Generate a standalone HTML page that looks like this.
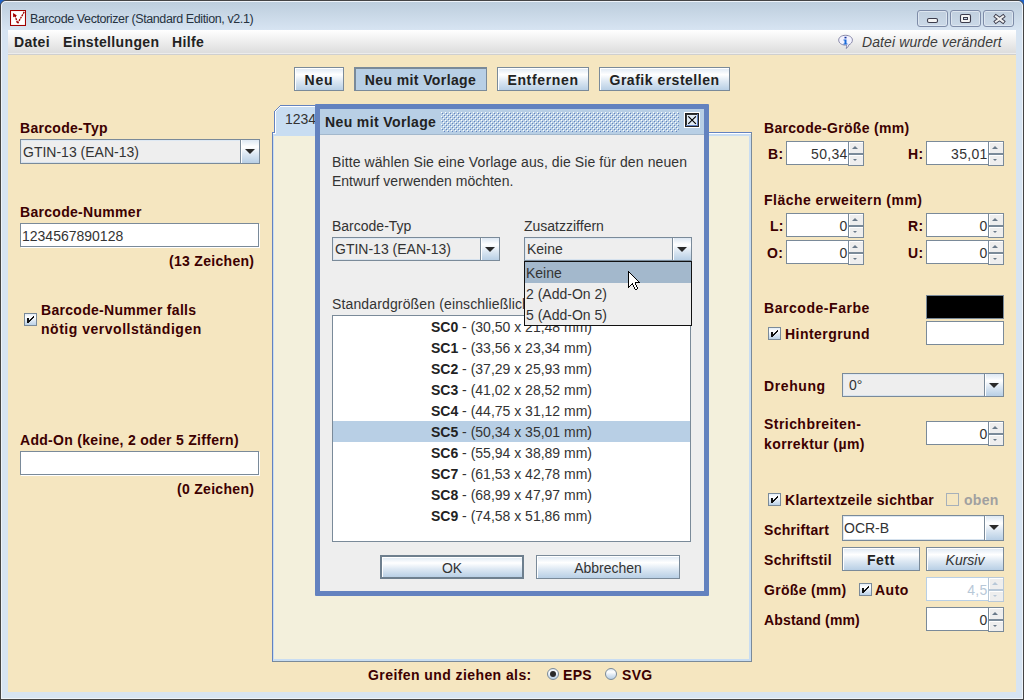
<!DOCTYPE html>
<html><head><meta charset="utf-8">
<style>
*{box-sizing:border-box}
html,body{margin:0;padding:0}
body{width:1024px;height:700px;overflow:hidden;position:relative;background:#1f63c8;font-family:"Liberation Sans",sans-serif}
.a{position:absolute}
.t{position:absolute;white-space:pre;line-height:16px;font-size:14px;font-family:"Liberation Sans",sans-serif}
.lb{font-weight:bold;letter-spacing:.3px;color:#3c0000}
.rg{color:#333}
/* frame */
#frame{left:0;top:0;width:1024px;height:700px;border:1px solid #444;border-radius:6px 6px 0 0;background:linear-gradient(#bccddc 0,#d7e4f2 29px,#d7e4f2 100%)}
#frame2{left:1px;top:1px;width:1022px;height:698px;border:1px solid #eef3f9;border-radius:5px 5px 0 0}
#menubar{left:8px;top:30px;width:1008px;height:25px;background:linear-gradient(#ffffff 0,#dedede 22px,#dedede 23px);border-bottom:1px solid #cfcfcf}
#menubar:after{content:"";position:absolute;left:0;top:23px;width:100%;height:1px;background:#ececec}
#content{left:8px;top:55px;width:1008px;height:637px;background:#f5e6c0}
.wbtn{top:10px;width:31px;height:17px;border:1px solid #7e8ca8;border-radius:3px;background:linear-gradient(#c0cfde,#cbd9e8);box-shadow:inset 0 0 0 1px #dde6f0}
/* metal button */
.btn{position:absolute;border:1px solid #7a8a99;background:linear-gradient(#dde8f3 0%,#ffffff 30%,#dde8f3 60%,#b8cfe5 100%);box-shadow:inset 1px 1px 0 #fff}
.btn span{position:absolute;left:0;right:0;text-align:center;white-space:pre;font-size:14px;line-height:16px}
/* text field */
.tf{position:absolute;background:#fff;border:1px solid #7a8a99;box-shadow:1px 1px 0 #fff}
.combo{position:absolute;background:#eeeeee;border:1px solid #7a8a99;box-shadow:inset 1px 1px 0 #dde8f3,inset 0 -1px 0 #d6e2ee}
.arrowbtn{position:absolute;top:0;bottom:0;right:0;width:19px;border-left:1px solid #7a8a99;background:linear-gradient(#dde8f3 0%,#ffffff 30%,#dde8f3 60%,#b8cfe5 100%);box-shadow:inset 1px 0 0 #fff}
.arrowbtn:after{content:"";position:absolute;left:4px;top:9px;border-left:5px solid transparent;border-right:5px solid transparent;border-top:5px solid #2a2a2a}
/* spinner */
.spin{position:absolute;height:25px;width:78px}
.spin .f{position:absolute;left:0;top:0;width:63px;height:24px;background:#fff;border:1px solid #7a8a99;border-right:none}
.spin .f span{position:absolute;right:1.4px;top:4px;font-size:14px;line-height:16px;color:#333;letter-spacing:.3px}
.spin .u,.spin .d{position:absolute;left:62px;width:16px;background:#eee;border:1px solid #7a8a99;box-shadow:inset 1px 1px 0 #fff}
.spin .u{top:0;height:13px}
.spin .d{top:13px;height:12px}
.spin .u:after{content:"";position:absolute;left:3px;top:4px;border-left:3px solid transparent;border-right:3px solid transparent;border-bottom:3px solid #6a7a8a}
.spin .d:after{content:"";position:absolute;left:4px;top:4px;border-left:2px solid transparent;border-right:2px solid transparent;border-top:2px solid #6a7a8a}
/* checkbox */
.cb{position:absolute;width:13px;height:13px;border:1px solid #7a8a99;background:linear-gradient(#dde8f3 0%,#ffffff 30%,#dde8f3 60%,#b8cfe5 100%)}
.spin.dis .f{border-color:#b8cfe5}
.spin.dis .f span{color:#b8c8d8}
.spin.dis .u,.spin.dis .d{border-color:#b8c8d8}
.spin.dis .u:after{border-bottom-color:#b8c8d8}
.spin.dis .d:after{border-top-color:#b8c8d8}
</style></head>
<body>
<div id="frame" class="a"></div>
<div id="frame2" class="a"></div>
<div class="a" style="left:0;top:699px;width:1024px;height:1px;background:#444"></div>

<!-- title icon -->
<svg class="a" style="left:10px;top:10px" width="16" height="16">
<rect x="0.5" y="0.5" width="15" height="15" fill="#fff" stroke="#a00000" stroke-width="1.1"/>
<path d="M3 3 L3.2 7.2 L7 5.6 Z" fill="#a80000"/>
<path d="M5 5.5 L7.6 13.4 L14.6 1.2" fill="none" stroke="#a00000" stroke-width="1.35" stroke-dasharray="2 0.8"/>
</svg>
<div class="t" style="left:30px;top:11px;font-size:12.5px;letter-spacing:-.4px;color:#26323f">Barcode Vectorizer (Standard Edition, v2.1)</div>

<div class="a wbtn" style="left:917px"></div>
<div class="a wbtn" style="left:950px"></div>
<div class="a wbtn" style="left:983px"></div>
<svg class="a" style="left:917px;top:10px" width="100" height="17">
<rect x="10.5" y="8.5" width="10" height="4" rx="1.5" fill="#f4f4f4" stroke="#3c3c4c" stroke-width="1.1"/>
<rect x="43.5" y="4.5" width="10" height="8" rx="1.5" fill="#f4f4f4" stroke="#3c3c4c" stroke-width="1.1"/>
<rect x="46.5" y="7.5" width="4" height="2" fill="#c8d6e4" stroke="#3c3c4c" stroke-width="1"/>
<path d="M79 6.4 L86 11.6 M86 6.4 L79 11.6" stroke="#3c3c4c" stroke-width="3.9" stroke-linecap="square"/>
<path d="M79 6.4 L86 11.6 M86 6.4 L79 11.6" stroke="#f0f0f0" stroke-width="2.1" stroke-linecap="square"/>
</svg>

<div id="menubar" class="a"></div>
<div class="t lb" style="left:14px;top:34px;color:#222;letter-spacing:.35px">Datei</div>
<div class="t lb" style="left:63px;top:34px;color:#222;letter-spacing:.35px">Einstellungen</div>
<div class="t lb" style="left:172px;top:34px;color:#222;letter-spacing:.35px">Hilfe</div>
<svg class="a" style="left:838px;top:34px" width="16" height="16">
<path d="M7.5 1.3 C11.5 1.3 14.4 3.2 14.4 6.1 C14.4 8.4 12.9 10 10.8 10.8 C10.4 12.4 9.6 13.6 8.2 14.5 C8.7 13.3 8.8 12.1 8.5 11.1 L7.5 11.1 C3.6 11.1 0.7 9 0.7 6.1 C0.7 3.2 3.6 1.3 7.5 1.3 Z" fill="#f2f2ff" stroke="#8888a8" stroke-width="1"/>
<rect x="6.5" y="2.8" width="2" height="1.6" fill="#1030a0"/>
<path d="M5.5 5.5 H8.5 V9.5 H9.5 V10.5 H5.5 V9.5 H6.5 V6.5 H5.5 Z" fill="#1a6ad8"/>
</svg>
<div class="t" style="left:862px;top:34px;font-style:italic;color:#3c3c3c;letter-spacing:.1px">Datei wurde verändert</div>

<div id="content" class="a"></div>

<!-- toolbar -->
<div class="btn" style="left:294px;top:67px;width:50px;height:24px"><span class="lb" style="top:4px;color:#222;letter-spacing:.9px">Neu</span></div>
<div class="btn" style="left:354px;top:67px;width:133px;height:24px;background:#b8cfe5;border-color:#7a8a99;border-width:2px 1px 1px 2px;box-shadow:none"><span class="lb" style="top:3px;left:-1px;color:#222;letter-spacing:.4px">Neu mit Vorlage</span></div>
<div class="btn" style="left:497px;top:67px;width:92px;height:24px"><span class="lb" style="top:4px;color:#222;letter-spacing:.65px">Entfernen</span></div>
<div class="btn" style="left:599px;top:67px;width:131px;height:24px"><span class="lb" style="top:4px;color:#222;letter-spacing:.5px">Grafik erstellen</span></div>

<!-- left panel -->
<div class="t lb" style="left:20px;top:120px">Barcode-Typ</div>
<div class="combo" style="left:20px;top:139px;width:240px;height:25px"><div class="t rg" style="left:2px;top:4px">GTIN-13 (EAN-13)</div><div class="arrowbtn"></div></div>

<div class="t lb" style="left:20px;top:204px">Barcode-Nummer</div>
<div class="tf" style="left:20px;top:223px;width:239px;height:24px"><div class="t rg" style="left:1px;top:4px">1234567890128</div></div>
<div class="t lb" style="left:169px;top:253px">(13 Zeichen)</div>

<svg class="a" style="left:24px;top:313px" width="13" height="13" shape-rendering="crispEdges"><defs><linearGradient id="g24313" x1="0" y1="0" x2="0" y2="1"><stop offset="0" stop-color="#dde8f3"/><stop offset=".3" stop-color="#fff"/><stop offset=".6" stop-color="#dde8f3"/><stop offset="1" stop-color="#b8cfe5"/></linearGradient></defs><rect x="0.5" y="0.5" width="12" height="12" fill="url(#g24313)" stroke="#7a8a99"/><rect x="3" y="5" width="2" height="5" fill="#111"/><rect x="9" y="3" width="1" height="1" fill="#111"/><rect x="8" y="4" width="1" height="1" fill="#111"/><rect x="7" y="5" width="1" height="1" fill="#111"/><rect x="6" y="6" width="1" height="1" fill="#111"/><rect x="5" y="7" width="1" height="1" fill="#111"/><rect x="9" y="4" width="1" height="1" fill="#111"/><rect x="8" y="5" width="1" height="1" fill="#111"/><rect x="7" y="6" width="1" height="1" fill="#111"/><rect x="6" y="7" width="1" height="1" fill="#111"/><rect x="5" y="8" width="1" height="1" fill="#111"/></svg>
<div class="t lb" style="left:41px;top:302px;letter-spacing:.3px">Barcode-Nummer falls</div>
<div class="t lb" style="left:41px;top:321px;letter-spacing:.52px">nötig vervollständigen</div>

<div class="t lb" style="left:20px;top:432px">Add-On (keine, 2 oder 5 Ziffern)</div>
<div class="tf" style="left:20px;top:451px;width:239px;height:24px"></div>
<div class="t lb" style="left:177px;top:481px">(0 Zeichen)</div>


<!-- tab pane -->
<div class="a" style="left:272px;top:132px;width:480px;height:530px;background:#f3f0dc;border-top:1px solid #6382bf;border-left:1px solid #6382bf;border-right:1px solid #7a8a99;border-bottom:1px solid #7a8a99"></div>
<div class="a" style="left:273px;top:133px;width:478px;height:1px;background:#fff"></div>
<div class="a" style="left:273px;top:134px;width:478px;height:2px;background:#c8ddf2"></div>
<div class="a" style="left:273px;top:134px;width:1px;height:527px;background:#c8ddf2"></div>
<div class="a" style="left:749px;top:134px;width:2px;height:527px;background:#c8ddf2"></div>
<div class="a" style="left:273px;top:659px;width:478px;height:2px;background:#c8ddf2"></div>
<svg class="a" style="left:272px;top:104px" width="50" height="32" shape-rendering="crispEdges">
<polygon points="3,8 8,3 50,3 50,32 1,32 1,29 3,29" fill="#c8ddf2"/>
<g fill="#6382bf"><rect x="2" y="7" width="1" height="22"/><rect x="3" y="6" width="1" height="1"/><rect x="4" y="5" width="1" height="1"/><rect x="5" y="4" width="1" height="1"/><rect x="6" y="3" width="1" height="1"/><rect x="7" y="2" width="1" height="1"/><rect x="8" y="1" width="42" height="1"/><rect x="0" y="28" width="3" height="1"/></g>
<g fill="#fff"><rect x="3" y="7" width="1" height="22"/><rect x="4" y="6" width="1" height="1"/><rect x="5" y="5" width="1" height="1"/><rect x="6" y="4" width="1" height="1"/><rect x="7" y="3" width="1" height="1"/><rect x="8" y="2" width="42" height="1"/><rect x="1" y="29" width="3" height="1"/></g>
</svg>
<div class="t rg" style="left:285px;top:111px">1234</div>

<!-- dialog -->
<div class="a" style="left:315px;top:104px;width:394px;height:492px;background:#6382bf;border-radius:1px"></div>
<div class="a" style="left:320px;top:109px;width:384px;height:26px;background:#b8cfe5;border-bottom:1px solid #a3b8cc"></div>
<svg class="a" style="left:441px;top:112px" width="238" height="20">
<defs><pattern id="bump" width="4" height="4" patternUnits="userSpaceOnUse">
<rect x="0" y="0" width="1" height="1" fill="#fff"/><rect x="2" y="2" width="1" height="1" fill="#fff"/>
<rect x="1" y="1" width="1" height="1" fill="#6382bf"/><rect x="3" y="3" width="1" height="1" fill="#6382bf"/>
</pattern></defs><rect width="238" height="20" fill="url(#bump)"/></svg>
<div class="t lb" style="left:325px;top:114px;color:#222;letter-spacing:.38px">Neu mit Vorlage</div>
<svg class="a" style="left:684px;top:112px" width="16" height="16" shape-rendering="crispEdges">
<rect x="0" y="0" width="16" height="16" fill="#fff"/>
<rect x="1" y="1" width="14" height="14" fill="#222"/>
<rect x="2" y="2" width="12" height="12" fill="#6382bf"/>
<rect x="3" y="3" width="10" height="10" fill="#e2ecf6"/>
<rect x="2" y="2" width="1" height="11" fill="#333"/><rect x="2" y="2" width="11" height="1" fill="#333"/>
</svg>
<svg class="a" style="left:684px;top:112px" width="16" height="16"><path d="M4.3 4.3 L11.9 11.9 M11.9 4.3 L4.3 11.9" stroke="#000" stroke-width="1.15"/></svg>
<div class="a" style="left:320px;top:135px;width:384px;height:456px;background:#eeeeee"></div>

<div class="t rg" style="left:332px;top:153px;line-height:19px;letter-spacing:.1px">Bitte wählen Sie eine Vorlage aus, die Sie für den neuen</div>
<div class="t rg" style="left:332px;top:172px;line-height:19px">Entwurf verwenden möchten.</div>
<div class="t rg" style="left:332px;top:218px">Barcode-Typ</div>
<div class="combo" style="left:332px;top:237px;width:168px;height:24px"><div class="t rg" style="left:2px;top:3px">GTIN-13 (EAN-13)</div><div class="arrowbtn"></div></div>
<div class="t rg" style="left:524px;top:218px">Zusatzziffern</div>
<div class="combo" style="left:524px;top:237px;width:168px;height:24px"><div class="t rg" style="left:2px;top:3px">Keine</div><div class="arrowbtn"></div></div>

<div class="t rg" style="left:332px;top:296px;letter-spacing:.14px">Standardgrößen (einschließlich Ruhezonen)</div>
<div class="a" style="left:332px;top:315px;width:359px;height:227px;background:#fff;border:1px solid #7a8a99"></div>
<div class="a" style="left:333px;top:421px;width:357px;height:21px;background:#b8cfe5"></div>
<div id="list" class="a" style="left:333px;top:317px;width:357px"><div style="height:21px;line-height:21px;text-align:center;font-size:14px;color:#333;white-space:pre"><b style="color:#222">SC0</b> - (30,50 x 21,48 mm)</div><div style="height:21px;line-height:21px;text-align:center;font-size:14px;color:#333;white-space:pre"><b style="color:#222">SC1</b> - (33,56 x 23,34 mm)</div><div style="height:21px;line-height:21px;text-align:center;font-size:14px;color:#333;white-space:pre"><b style="color:#222">SC2</b> - (37,29 x 25,93 mm)</div><div style="height:21px;line-height:21px;text-align:center;font-size:14px;color:#333;white-space:pre"><b style="color:#222">SC3</b> - (41,02 x 28,52 mm)</div><div style="height:21px;line-height:21px;text-align:center;font-size:14px;color:#333;white-space:pre"><b style="color:#222">SC4</b> - (44,75 x 31,12 mm)</div><div style="height:21px;line-height:21px;text-align:center;font-size:14px;color:#333;white-space:pre"><b style="color:#222">SC5</b> - (50,34 x 35,01 mm)</div><div style="height:21px;line-height:21px;text-align:center;font-size:14px;color:#333;white-space:pre"><b style="color:#222">SC6</b> - (55,94 x 38,89 mm)</div><div style="height:21px;line-height:21px;text-align:center;font-size:14px;color:#333;white-space:pre"><b style="color:#222">SC7</b> - (61,53 x 42,78 mm)</div><div style="height:21px;line-height:21px;text-align:center;font-size:14px;color:#333;white-space:pre"><b style="color:#222">SC8</b> - (68,99 x 47,97 mm)</div><div style="height:21px;line-height:21px;text-align:center;font-size:14px;color:#333;white-space:pre"><b style="color:#222">SC9</b> - (74,58 x 51,86 mm)</div></div>

<!-- popup -->
<div class="a" style="left:524px;top:261px;width:168px;height:65px;background:#eeeeee;border:1px solid #111"></div>
<div class="a" style="left:525px;top:262px;width:166px;height:21px;background:#a3b8cc"></div>
<div class="t rg" style="left:526px;top:265px">Keine</div>
<div class="t rg" style="left:526px;top:286px">2 (Add-On 2)</div>
<div class="t rg" style="left:526px;top:307px">5 (Add-On 5)</div>
<svg class="a" style="left:628px;top:271px" width="12" height="19" shape-rendering="crispEdges"><rect x="0" y="0" width="1" height="1" fill="#000"/><rect x="0" y="1" width="1" height="1" fill="#000"/><rect x="1" y="1" width="1" height="1" fill="#000"/><rect x="0" y="2" width="1" height="1" fill="#000"/><rect x="1" y="2" width="1" height="1" fill="#fff"/><rect x="2" y="2" width="1" height="1" fill="#000"/><rect x="0" y="3" width="1" height="1" fill="#000"/><rect x="1" y="3" width="1" height="1" fill="#fff"/><rect x="2" y="3" width="1" height="1" fill="#fff"/><rect x="3" y="3" width="1" height="1" fill="#000"/><rect x="0" y="4" width="1" height="1" fill="#000"/><rect x="1" y="4" width="1" height="1" fill="#fff"/><rect x="2" y="4" width="1" height="1" fill="#fff"/><rect x="3" y="4" width="1" height="1" fill="#fff"/><rect x="4" y="4" width="1" height="1" fill="#000"/><rect x="0" y="5" width="1" height="1" fill="#000"/><rect x="1" y="5" width="1" height="1" fill="#fff"/><rect x="2" y="5" width="1" height="1" fill="#fff"/><rect x="3" y="5" width="1" height="1" fill="#fff"/><rect x="4" y="5" width="1" height="1" fill="#fff"/><rect x="5" y="5" width="1" height="1" fill="#000"/><rect x="0" y="6" width="1" height="1" fill="#000"/><rect x="1" y="6" width="1" height="1" fill="#fff"/><rect x="2" y="6" width="1" height="1" fill="#fff"/><rect x="3" y="6" width="1" height="1" fill="#fff"/><rect x="4" y="6" width="1" height="1" fill="#fff"/><rect x="5" y="6" width="1" height="1" fill="#fff"/><rect x="6" y="6" width="1" height="1" fill="#000"/><rect x="0" y="7" width="1" height="1" fill="#000"/><rect x="1" y="7" width="1" height="1" fill="#fff"/><rect x="2" y="7" width="1" height="1" fill="#fff"/><rect x="3" y="7" width="1" height="1" fill="#fff"/><rect x="4" y="7" width="1" height="1" fill="#fff"/><rect x="5" y="7" width="1" height="1" fill="#fff"/><rect x="6" y="7" width="1" height="1" fill="#fff"/><rect x="7" y="7" width="1" height="1" fill="#000"/><rect x="0" y="8" width="1" height="1" fill="#000"/><rect x="1" y="8" width="1" height="1" fill="#fff"/><rect x="2" y="8" width="1" height="1" fill="#fff"/><rect x="3" y="8" width="1" height="1" fill="#fff"/><rect x="4" y="8" width="1" height="1" fill="#fff"/><rect x="5" y="8" width="1" height="1" fill="#fff"/><rect x="6" y="8" width="1" height="1" fill="#fff"/><rect x="7" y="8" width="1" height="1" fill="#fff"/><rect x="8" y="8" width="1" height="1" fill="#000"/><rect x="0" y="9" width="1" height="1" fill="#000"/><rect x="1" y="9" width="1" height="1" fill="#fff"/><rect x="2" y="9" width="1" height="1" fill="#fff"/><rect x="3" y="9" width="1" height="1" fill="#fff"/><rect x="4" y="9" width="1" height="1" fill="#fff"/><rect x="5" y="9" width="1" height="1" fill="#fff"/><rect x="6" y="9" width="1" height="1" fill="#fff"/><rect x="7" y="9" width="1" height="1" fill="#fff"/><rect x="8" y="9" width="1" height="1" fill="#fff"/><rect x="9" y="9" width="1" height="1" fill="#000"/><rect x="0" y="10" width="1" height="1" fill="#000"/><rect x="1" y="10" width="1" height="1" fill="#fff"/><rect x="2" y="10" width="1" height="1" fill="#fff"/><rect x="3" y="10" width="1" height="1" fill="#fff"/><rect x="4" y="10" width="1" height="1" fill="#fff"/><rect x="5" y="10" width="1" height="1" fill="#fff"/><rect x="6" y="10" width="1" height="1" fill="#fff"/><rect x="7" y="10" width="1" height="1" fill="#fff"/><rect x="8" y="10" width="1" height="1" fill="#fff"/><rect x="9" y="10" width="1" height="1" fill="#fff"/><rect x="10" y="10" width="1" height="1" fill="#000"/><rect x="0" y="11" width="1" height="1" fill="#000"/><rect x="1" y="11" width="1" height="1" fill="#fff"/><rect x="2" y="11" width="1" height="1" fill="#fff"/><rect x="3" y="11" width="1" height="1" fill="#fff"/><rect x="4" y="11" width="1" height="1" fill="#fff"/><rect x="5" y="11" width="1" height="1" fill="#fff"/><rect x="6" y="11" width="1" height="1" fill="#fff"/><rect x="7" y="11" width="1" height="1" fill="#000"/><rect x="8" y="11" width="1" height="1" fill="#000"/><rect x="9" y="11" width="1" height="1" fill="#000"/><rect x="10" y="11" width="1" height="1" fill="#000"/><rect x="11" y="11" width="1" height="1" fill="#000"/><rect x="0" y="12" width="1" height="1" fill="#000"/><rect x="1" y="12" width="1" height="1" fill="#fff"/><rect x="2" y="12" width="1" height="1" fill="#fff"/><rect x="3" y="12" width="1" height="1" fill="#fff"/><rect x="4" y="12" width="1" height="1" fill="#000"/><rect x="5" y="12" width="1" height="1" fill="#fff"/><rect x="6" y="12" width="1" height="1" fill="#fff"/><rect x="7" y="12" width="1" height="1" fill="#000"/><rect x="0" y="13" width="1" height="1" fill="#000"/><rect x="1" y="13" width="1" height="1" fill="#fff"/><rect x="2" y="13" width="1" height="1" fill="#fff"/><rect x="3" y="13" width="1" height="1" fill="#000"/><rect x="4" y="13" width="1" height="1" fill="#000"/><rect x="5" y="13" width="1" height="1" fill="#fff"/><rect x="6" y="13" width="1" height="1" fill="#fff"/><rect x="7" y="13" width="1" height="1" fill="#000"/><rect x="0" y="14" width="1" height="1" fill="#000"/><rect x="1" y="14" width="1" height="1" fill="#fff"/><rect x="2" y="14" width="1" height="1" fill="#000"/><rect x="5" y="14" width="1" height="1" fill="#000"/><rect x="6" y="14" width="1" height="1" fill="#fff"/><rect x="7" y="14" width="1" height="1" fill="#fff"/><rect x="8" y="14" width="1" height="1" fill="#000"/><rect x="0" y="15" width="1" height="1" fill="#000"/><rect x="1" y="15" width="1" height="1" fill="#000"/><rect x="5" y="15" width="1" height="1" fill="#000"/><rect x="6" y="15" width="1" height="1" fill="#fff"/><rect x="7" y="15" width="1" height="1" fill="#fff"/><rect x="8" y="15" width="1" height="1" fill="#000"/><rect x="0" y="16" width="1" height="1" fill="#000"/><rect x="6" y="16" width="1" height="1" fill="#000"/><rect x="7" y="16" width="1" height="1" fill="#fff"/><rect x="8" y="16" width="1" height="1" fill="#fff"/><rect x="9" y="16" width="1" height="1" fill="#000"/><rect x="6" y="17" width="1" height="1" fill="#000"/><rect x="7" y="17" width="1" height="1" fill="#fff"/><rect x="8" y="17" width="1" height="1" fill="#fff"/><rect x="9" y="17" width="1" height="1" fill="#000"/><rect x="7" y="18" width="1" height="1" fill="#000"/><rect x="8" y="18" width="1" height="1" fill="#000"/></svg>

<div class="btn" style="left:380px;top:555px;width:144px;height:24px;border:2px solid #6e7f8e"><span class="rg" style="top:3px">OK</span></div>
<div class="btn" style="left:536px;top:555px;width:144px;height:24px"><span class="rg" style="top:4px">Abbrechen</span></div>

<!-- bottom -->
<div class="t lb" style="left:368px;top:667px;letter-spacing:.42px">Greifen und ziehen als:</div>
<div class="a" style="left:547px;top:668px;width:12px;height:12px;border-radius:50%;border:1px solid #7a8a99;background:linear-gradient(#dde8f3,#fff 30%,#dde8f3 60%,#b8cfe5)"></div>
<div class="a" style="left:550px;top:671px;width:6px;height:6px;border-radius:50%;background:#2a2a2a"></div>
<div class="t lb" style="left:563px;top:667px">EPS</div>
<div class="a" style="left:605px;top:668px;width:12px;height:12px;border-radius:50%;border:1px solid #7a8a99;background:linear-gradient(#dde8f3,#fff 30%,#dde8f3 60%,#b8cfe5)"></div>
<div class="t lb" style="left:622px;top:667px">SVG</div>


<!-- right panel -->
<div class="t lb" style="left:764px;top:120px">Barcode-Größe (mm)</div>
<div class="t lb" style="left:768px;top:146px">B:</div>
<div class="spin" style="left:786px;top:141px"><div class="f"><span>50,34</span></div><div class="u"></div><div class="d"></div></div>
<div class="t lb" style="left:908px;top:146px">H:</div>
<div class="spin" style="left:926px;top:141px"><div class="f"><span>35,01</span></div><div class="u"></div><div class="d"></div></div>
<div class="t lb" style="left:764px;top:192px;letter-spacing:.47px">Fläche erweitern (mm)</div>
<div class="t lb" style="left:770px;top:218px">L:</div>
<div class="spin" style="left:786px;top:213px"><div class="f"><span>0</span></div><div class="u"></div><div class="d"></div></div>
<div class="t lb" style="left:908px;top:218px">R:</div>
<div class="spin" style="left:926px;top:213px"><div class="f"><span>0</span></div><div class="u"></div><div class="d"></div></div>
<div class="t lb" style="left:767px;top:245px">O:</div>
<div class="spin" style="left:786px;top:240px"><div class="f"><span>0</span></div><div class="u"></div><div class="d"></div></div>
<div class="t lb" style="left:908px;top:245px">U:</div>
<div class="spin" style="left:926px;top:240px"><div class="f"><span>0</span></div><div class="u"></div><div class="d"></div></div>

<div class="t lb" style="left:764px;top:300px;letter-spacing:.55px">Barcode-Farbe</div>
<div class="a" style="left:926px;top:295px;width:78px;height:24px;background:#000;border:1px solid #7a8a99"></div>
<div class="a" style="left:926px;top:321px;width:78px;height:24px;background:#fff;border:1px solid #7a8a99"></div>
<svg class="a" style="left:768px;top:327px" width="13" height="13" shape-rendering="crispEdges"><defs><linearGradient id="g768327" x1="0" y1="0" x2="0" y2="1"><stop offset="0" stop-color="#dde8f3"/><stop offset=".3" stop-color="#fff"/><stop offset=".6" stop-color="#dde8f3"/><stop offset="1" stop-color="#b8cfe5"/></linearGradient></defs><rect x="0.5" y="0.5" width="12" height="12" fill="url(#g768327)" stroke="#7a8a99"/><rect x="3" y="5" width="2" height="5" fill="#111"/><rect x="9" y="3" width="1" height="1" fill="#111"/><rect x="8" y="4" width="1" height="1" fill="#111"/><rect x="7" y="5" width="1" height="1" fill="#111"/><rect x="6" y="6" width="1" height="1" fill="#111"/><rect x="5" y="7" width="1" height="1" fill="#111"/><rect x="9" y="4" width="1" height="1" fill="#111"/><rect x="8" y="5" width="1" height="1" fill="#111"/><rect x="7" y="6" width="1" height="1" fill="#111"/><rect x="6" y="7" width="1" height="1" fill="#111"/><rect x="5" y="8" width="1" height="1" fill="#111"/></svg>
<div class="t lb" style="left:785px;top:326px;letter-spacing:.45px">Hintergrund</div>

<div class="t lb" style="left:764px;top:378px;letter-spacing:.6px">Drehung</div>
<div class="combo" style="left:842px;top:373px;width:162px;height:24px"><div class="t rg" style="left:6px;top:3px">0°</div><div class="arrowbtn"></div></div>

<div class="t lb" style="left:764px;top:416px;letter-spacing:.45px">Strichbreiten-</div>
<div class="t lb" style="left:764px;top:436px;letter-spacing:.4px">korrektur (µm)</div>
<div class="spin" style="left:926px;top:421px"><div class="f"><span>0</span></div><div class="u"></div><div class="d"></div></div>

<svg class="a" style="left:768px;top:493px" width="13" height="13" shape-rendering="crispEdges"><defs><linearGradient id="g768494" x1="0" y1="0" x2="0" y2="1"><stop offset="0" stop-color="#dde8f3"/><stop offset=".3" stop-color="#fff"/><stop offset=".6" stop-color="#dde8f3"/><stop offset="1" stop-color="#b8cfe5"/></linearGradient></defs><rect x="0.5" y="0.5" width="12" height="12" fill="url(#g768494)" stroke="#7a8a99"/><rect x="3" y="5" width="2" height="5" fill="#111"/><rect x="9" y="3" width="1" height="1" fill="#111"/><rect x="8" y="4" width="1" height="1" fill="#111"/><rect x="7" y="5" width="1" height="1" fill="#111"/><rect x="6" y="6" width="1" height="1" fill="#111"/><rect x="5" y="7" width="1" height="1" fill="#111"/><rect x="9" y="4" width="1" height="1" fill="#111"/><rect x="8" y="5" width="1" height="1" fill="#111"/><rect x="7" y="6" width="1" height="1" fill="#111"/><rect x="6" y="7" width="1" height="1" fill="#111"/><rect x="5" y="8" width="1" height="1" fill="#111"/></svg>
<div class="t lb" style="left:785px;top:492px;letter-spacing:.38px">Klartextzeile sichtbar</div>
<svg class="a" style="left:946px;top:493px" width="13" height="13" shape-rendering="crispEdges"><rect x="0.5" y="0.5" width="12" height="12" fill="none" stroke="#a6b0ba"/></svg>
<div class="t lb" style="left:964px;top:492px;color:#a0a0a0">oben</div>

<div class="t lb" style="left:764px;top:522px">Schriftart</div>
<div class="combo" style="left:842px;top:515px;width:162px;height:26px;background:#fff"><div class="t rg" style="left:1px;top:4px">OCR-B</div><div class="arrowbtn"></div></div>

<div class="t lb" style="left:764px;top:552px">Schriftstil</div>
<div class="btn" style="left:842px;top:547px;width:78px;height:24px"><span class="lb" style="top:4px;color:#222;letter-spacing:.6px">Fett</span></div>
<div class="btn" style="left:926px;top:547px;width:78px;height:24px"><span class="rg" style="top:4px;font-style:italic">Kursiv</span></div>

<div class="t lb" style="left:764px;top:582px">Größe (mm)</div>
<svg class="a" style="left:859px;top:583px" width="13" height="13" shape-rendering="crispEdges"><defs><linearGradient id="g859584" x1="0" y1="0" x2="0" y2="1"><stop offset="0" stop-color="#dde8f3"/><stop offset=".3" stop-color="#fff"/><stop offset=".6" stop-color="#dde8f3"/><stop offset="1" stop-color="#b8cfe5"/></linearGradient></defs><rect x="0.5" y="0.5" width="12" height="12" fill="url(#g859584)" stroke="#7a8a99"/><rect x="3" y="5" width="2" height="5" fill="#111"/><rect x="9" y="3" width="1" height="1" fill="#111"/><rect x="8" y="4" width="1" height="1" fill="#111"/><rect x="7" y="5" width="1" height="1" fill="#111"/><rect x="6" y="6" width="1" height="1" fill="#111"/><rect x="5" y="7" width="1" height="1" fill="#111"/><rect x="9" y="4" width="1" height="1" fill="#111"/><rect x="8" y="5" width="1" height="1" fill="#111"/><rect x="7" y="6" width="1" height="1" fill="#111"/><rect x="6" y="7" width="1" height="1" fill="#111"/><rect x="5" y="8" width="1" height="1" fill="#111"/></svg>
<div class="t lb" style="left:875px;top:582px;letter-spacing:.5px">Auto</div>
<div class="spin dis" style="left:926px;top:577px"><div class="f"><span>4,5</span></div><div class="u"></div><div class="d"></div></div>
<div class="t lb" style="left:764px;top:612px;letter-spacing:.15px">Abstand (mm)</div>
<div class="spin" style="left:926px;top:607px"><div class="f"><span>0</span></div><div class="u"></div><div class="d"></div></div>

</body></html>
